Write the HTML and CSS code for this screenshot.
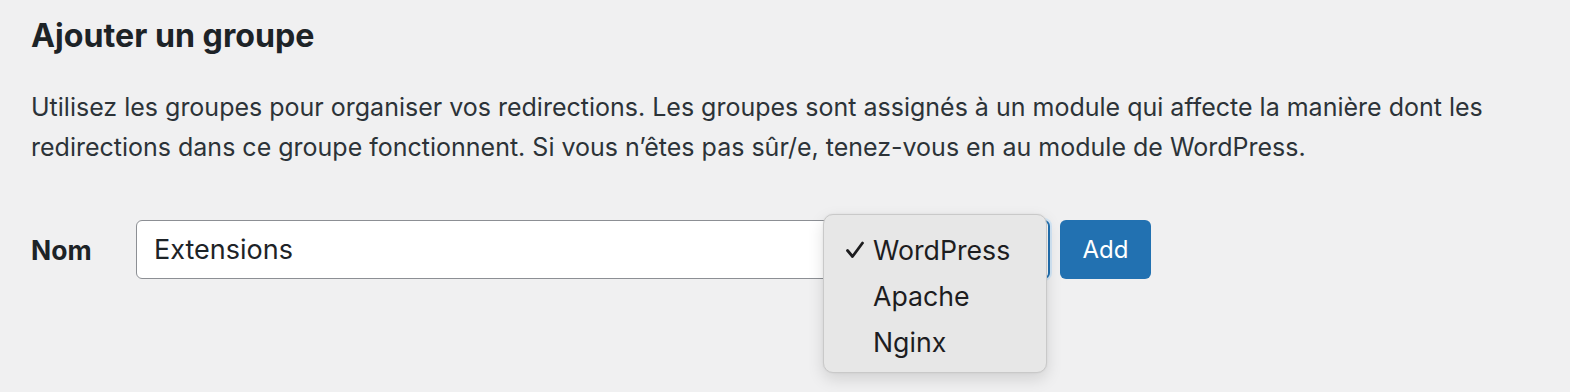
FILE: index.html
```html
<!DOCTYPE html>
<html lang="fr">
<head>
<meta charset="utf-8">
<link rel="stylesheet" href="styles.css">
</head>
<body>
<div class="wrap">
  <h2 class="title">Ajouter un groupe</h2>
  <p class="desc">Utilisez les groupes pour organiser vos redirections. Les groupes sont assignés à un module qui affecte la manière dont les redirections dans ce groupe fonctionnent. Si vous n’êtes pas sûr/e, tenez-vous en au module de WordPress.</p>
  <div class="form-row">
    <label class="label" for="name">Nom</label>
    <input class="text-input" id="name" type="text" value="Extensions">
    <div class="select-wrap">
      <div class="select">WordPress</div>
      <ul class="menu">
        <li class="menu-item"><svg class="check" width="20" height="18" viewBox="0 0 20 18"><path d="M2.5 9.5 L7.5 15.5 L17.5 2" fill="none" stroke="#1d1d1f" stroke-width="2.8" stroke-linecap="round" stroke-linejoin="round"/></svg>WordPress</li>
        <li class="menu-item">Apache</li>
        <li class="menu-item">Nginx</li>
      </ul>
    </div>
    <button class="btn" type="button">Add</button>
  </div>
</div>
</body>
</html>
```
FILE: styles.css
```css
html, body {
  margin: 0;
  padding: 0;
  background: #f0f0f1;
}
body {
  min-height: 100vh;
  font-family: Inter, "Noto Sans", "Liberation Sans", sans-serif;
  color: #3c434a;
}
.wrap {
  padding: 16px 31px 120px 31px;
}
.title {
  margin: 0;
  font-size: 32.2px;
  line-height: 40px;
  font-weight: 700;
  color: #1d2327;
}
.desc {
  margin: 31px 0 0 0;
  max-width: 1500px;
  font-size: 25px;
  line-height: 40px;
  color: #2c3338;
}
.form-row {
  display: flex;
  align-items: center;
  margin-top: 53px;
}
.label {
  width: 105px;
  font-size: 26.5px;
  font-weight: 700;
  color: #1d2327;
}
.text-input {
  box-sizing: border-box;
  width: 694px;
  height: 59px;
  border: 1.5px solid #8c8f94;
  border-radius: 6px;
  background: #fff;
  padding: 0 17px;
  font-family: inherit;
  font-size: 27px;
  color: #1d2327;
  margin: 0;
}
.select-wrap {
  position: relative;
  margin-left: 8px;
}
.select {
  box-sizing: border-box;
  width: 212px;
  height: 59px;
  border: 2px solid #2271b1;
  border-radius: 6px;
  box-shadow: 0 0 0 2px #d3e6f6;
  background: #fff;
  padding: 0 14px;
  display: flex;
  align-items: center;
  font-size: 27px;
  color: #1d2327;
}
.menu {
  position: absolute;
  left: -15px;
  top: -6px;
  width: 224px;
  box-sizing: border-box;
  margin: 0;
  padding: 12px 0 7px 0;
  list-style: none;
  background: #e7e7e7;
  border: 1px solid #c9c9c9;
  border-radius: 10px;
  box-shadow: 0 6px 16px rgba(0, 0, 0, 0.13), 0 0 2px rgba(0, 0, 0, 0.08);
}
.menu-item {
  position: relative;
  height: 46px;
  line-height: 46px;
  padding-left: 49px;
  font-size: 26.7px;
  color: #1d1d1f;
}
.check {
  position: absolute;
  left: 21px;
  top: 14px;
}
.btn {
  margin-left: 10px;
  height: 59px;
  width: 91px;
  border: 0;
  border-radius: 6px;
  background: #2271b1;
  color: #fff;
  font-family: inherit;
  font-size: 24px;
  padding: 0;
}
```
